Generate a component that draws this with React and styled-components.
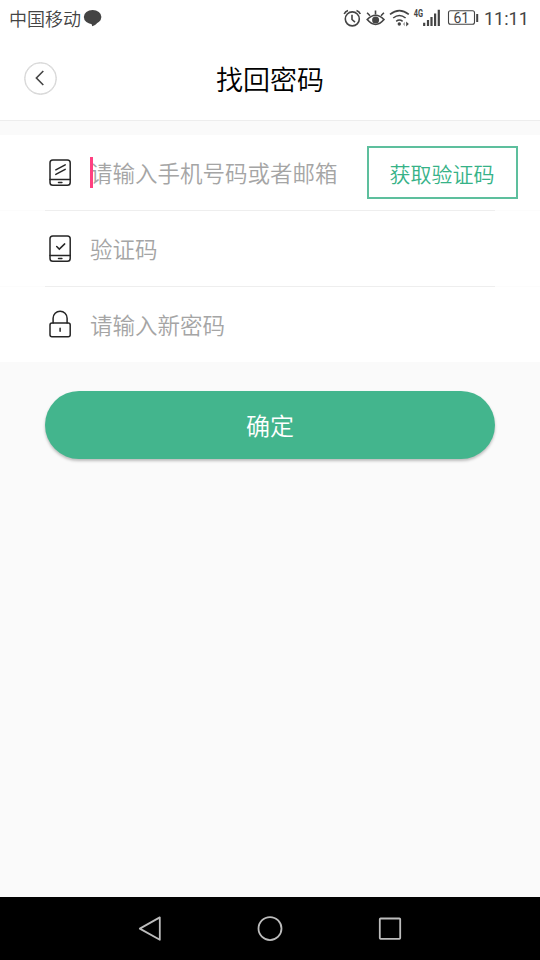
import React from 'react';
import styled, { createGlobalStyle } from 'styled-components';

const GlobalStyle = createGlobalStyle`
    * {
        box-sizing:border-box;
    }
    body {
        margin:0;
        background:#fafafa;
        font-family:"Noto Sans CJK SC", sans-serif;
        font-weight:350;
    }
    svg {
        display:block;
        flex-shrink:0;
    }
`;

const Screen = styled.div`
    width:100%;
    height:100vh;
    display:flex;
    flex-direction:column;
    background:#fafafa;
    overflow:hidden;
`;

/* status bar */

const StatusBar = styled.div`
    height:36px;
    display:flex;
    align-items:center;
    justify-content:space-between;
    padding-left:9px;
    background:white;
    color:#444;
`;

const Carrier = styled.div`
    display:flex;
    align-items:center;
    gap:2px;
    font-size:18px;
    line-height:36px;
`;

const StatusRight = styled.div`
    display:flex;
    align-items:center;
    padding-right:11px;
`;

const Clock = styled.div`
    margin-left:5px;
    width:45px;
    padding-top:2px;
    font-family:Roboto, sans-serif;
    font-weight:400;
    font-size:18px;
    line-height:36px;
    white-space:nowrap;
`;

/* header */

const HeaderBlock = styled.div`
    height:85px;
    display:grid;
    grid-template-columns:80px 1fr 80px;
    align-items:center;
    background:white;
    border-bottom:1px solid #ededed;
`;

const BackButton = styled.button`
    width:33px;
    height:33px;
    margin-left:24px;
    padding:0 2px 0 0;
    display:flex;
    align-items:center;
    justify-content:center;
    border:1px solid #d6d6d6;
    border-radius:50%;
    background:white;
    box-shadow:inset 0 0 0 0.5px #d6d6d6;
`;

const Title = styled.h1`
    margin:0;
    padding-top:2px;
    color:#000;
    font-size:27px;
    font-weight:350;
    line-height:40px;
    text-align:center;
`;

/* form */

const Form = styled.div`
    margin-top:14px;
    background:white;
`;

const Row = styled.div`
    height:75px;
    display:flex;
    align-items:center;
    padding-left:48px;
    padding-right:22px;
`;

const Divider = styled.div`
    height:1px;
    padding:0 45px;
    background:#fcfcfc;
    &::before {
        content:"";
        display:block;
        height:1px;
        background:#eee;
    }
`;

const Field = styled.div`
    flex:1;
    position:relative;
    margin-left:18px;
    padding-bottom:2px;
    color:#a5a5a5;
    font-size:22.5px;
    line-height:34px;
    white-space:nowrap;
`;

const Caret = styled.i`
    position:absolute;
    left:0;
    top:2px;
    width:3px;
    height:31px;
    background:#ff4081;
`;

const CodeButton = styled.button`
    width:151px;
    height:53px;
    padding:0 1px 0 0;
    border:2px solid #5dbf9d;
    background:white;
    color:#36b287;
    font-family:inherit;
    font-weight:350;
    font-size:21px;
    line-height:32px;
`;

const SubmitButton = styled.button`
    height:68px;
    margin:29px 45px 0;
    padding:0;
    border:0;
    border-radius:34px;
    background:#43b58d;
    box-shadow:0 2px 3px rgba(0,0,0,0.25);
    color:white;
    font-family:inherit;
    font-weight:350;
    font-size:24px;
    line-height:36px;
`;

/* android navigation */

const NavBar = styled.div`
    height:63px;
    margin-top:auto;
    display:flex;
    align-items:center;
    justify-content:center;
    gap:90px;
    background:#000;
`;

const ChatIcon = () => (
    <svg width="19" height="18" viewBox="0 0 19 18">
        <ellipse cx="9.6" cy="8" rx="8.8" ry="6.9" fill="#444" />
        <path d="M5.5 13.5Q9.5 14.6 9 17.3Q13.5 16 15 12.5z" fill="#444" />
    </svg>
);

const StatusIcons = () => (
    <svg width="136" height="36" viewBox="343 0 136 36" fill="none" stroke="#444" strokeWidth="1.6">
        {/* alarm */}
        <circle cx="352.3" cy="18.9" r="7" />
        <path d="M352 14.7v4.8l3 2.6M344.2 14q1-2.7 3.8-3.6M356.5 10.4q2.8 .9 3.8 3.6" />
        {/* eye */}
        <path d="M367.2 19.6q8.4-8.6 16.8 0q-8.4 9.8-16.8 0z" />
        <path d="M375.5 14.5v-4M370 15.8l-2.9-3M381 15.8l2.9-3" />
        <circle cx="375.6" cy="19.9" r="3.5" fill="#444" stroke="none" />
        {/* wifi */}
        <path d="M390 14.4q9.4-7.7 18.8 0M393.2 18q6.2-5 12.4 0M396.2 21.3q3.2-2.5 6.4 0" />
        <circle cx="399.3" cy="24" r="1.7" fill="#444" stroke="none" />
        <path d="M405 21.8v4.4l-2.2-2.2z" fill="#aaa" stroke="none" />
        <path d="M406.2 21.4v5l2.6-2.5z" fill="#444" stroke="none" />
        {/* network */}
        <text x="413.8" y="17.2" fill="#444" stroke="none" fontFamily="Roboto" fontWeight="700" fontSize="10.5" textLength="9.3" lengthAdjust="spacingAndGlyphs">4G</text>
        <path d="M424.2 22.8v3.2M428 20v6M431.5 17v9M435.1 13.5v12.5M438.8 9.8v16.2" strokeWidth="2.2" />
        {/* battery */}
        <rect x="448.5" y="10.7" width="26" height="13.6" rx="2" strokeWidth="1.1" />
        <path d="M477.2 14v8" strokeWidth="2" />
        <text x="461.3" y="22.7" fill="#444" stroke="none" fontFamily="Roboto" fontWeight="400" fontSize="14" textAnchor="middle">61</text>
    </svg>
);

const PhoneIcon = ({ children }) => (
    <svg width="24" height="31" viewBox="0 0 24 31" fill="none" stroke="#262626" strokeWidth="1.5" strokeLinecap="round">
        <rect x="2" y="3" width="20.2" height="25.2" rx="2.8" />
        <path d="M2 22.6h20.2M10.5 25.5h3.4" />
        {children}
    </svg>
);

const LockIcon = () => (
    <svg width="24" height="31" viewBox="0 0 24 31" fill="none" stroke="#262626" strokeWidth="1.5" strokeLinecap="round">
        <rect x="2" y="14" width="20.2" height="13.8" rx="2" />
        <path d="M5.1 14V9.2a7 7 0 0 1 14 0V14M12.1 19.3v3" />
    </svg>
);

const App = () => {
    return (
        <>
        <GlobalStyle />
        <Screen>
            <StatusBar>
                <Carrier>
                    <span>中国移动</span>
                    <ChatIcon />
                </Carrier>
                <StatusRight>
                    <StatusIcons />
                    <Clock>11:11</Clock>
                </StatusRight>
            </StatusBar>

            <HeaderBlock>
                <BackButton>
                    <svg width="10" height="16" viewBox="0 0 10 16" fill="none" stroke="#444" strokeWidth="1.6">
                        <path d="M8.3 1L1.4 8l6.9 7" />
                    </svg>
                </BackButton>
                <Title>找回密码</Title>
            </HeaderBlock>

            <Form>
                <Row>
                    <PhoneIcon>
                        <path d="M7.8 12.8l9.4-5M7.8 17.4l9.4-5" />
                    </PhoneIcon>
                    <Field>
                        请输入手机号码或者邮箱
                        <Caret />
                    </Field>
                    <CodeButton>获取验证码</CodeButton>
                </Row>
                <Divider />
                <Row>
                    <PhoneIcon>
                        <path d="M8.7 13.5l2.6 2.6 5.4-5.2" />
                    </PhoneIcon>
                    <Field>验证码</Field>
                </Row>
                <Divider />
                <Row>
                    <LockIcon />
                    <Field>请输入新密码</Field>
                </Row>
            </Form>

            <SubmitButton>确定</SubmitButton>

            <NavBar>
                <svg width="30" height="30" viewBox="0 0 30 30" fill="none" stroke="#bdbdbd" strokeWidth="1.8" strokeLinejoin="round">
                    <path d="M4.8 14.6L24.8 3.4v22.4z" />
                </svg>
                <svg width="30" height="30" viewBox="0 0 30 30" fill="none" stroke="#bdbdbd" strokeWidth="1.8">
                    <circle cx="15" cy="14.6" r="11.5" />
                </svg>
                <svg width="30" height="30" viewBox="0 0 30 30" fill="none" stroke="#bdbdbd" strokeWidth="1.8">
                    <rect x="4.8" y="4.5" width="20.4" height="20.4" rx="0.8" />
                </svg>
            </NavBar>
        </Screen>
        </>
    );
};

export default App;
